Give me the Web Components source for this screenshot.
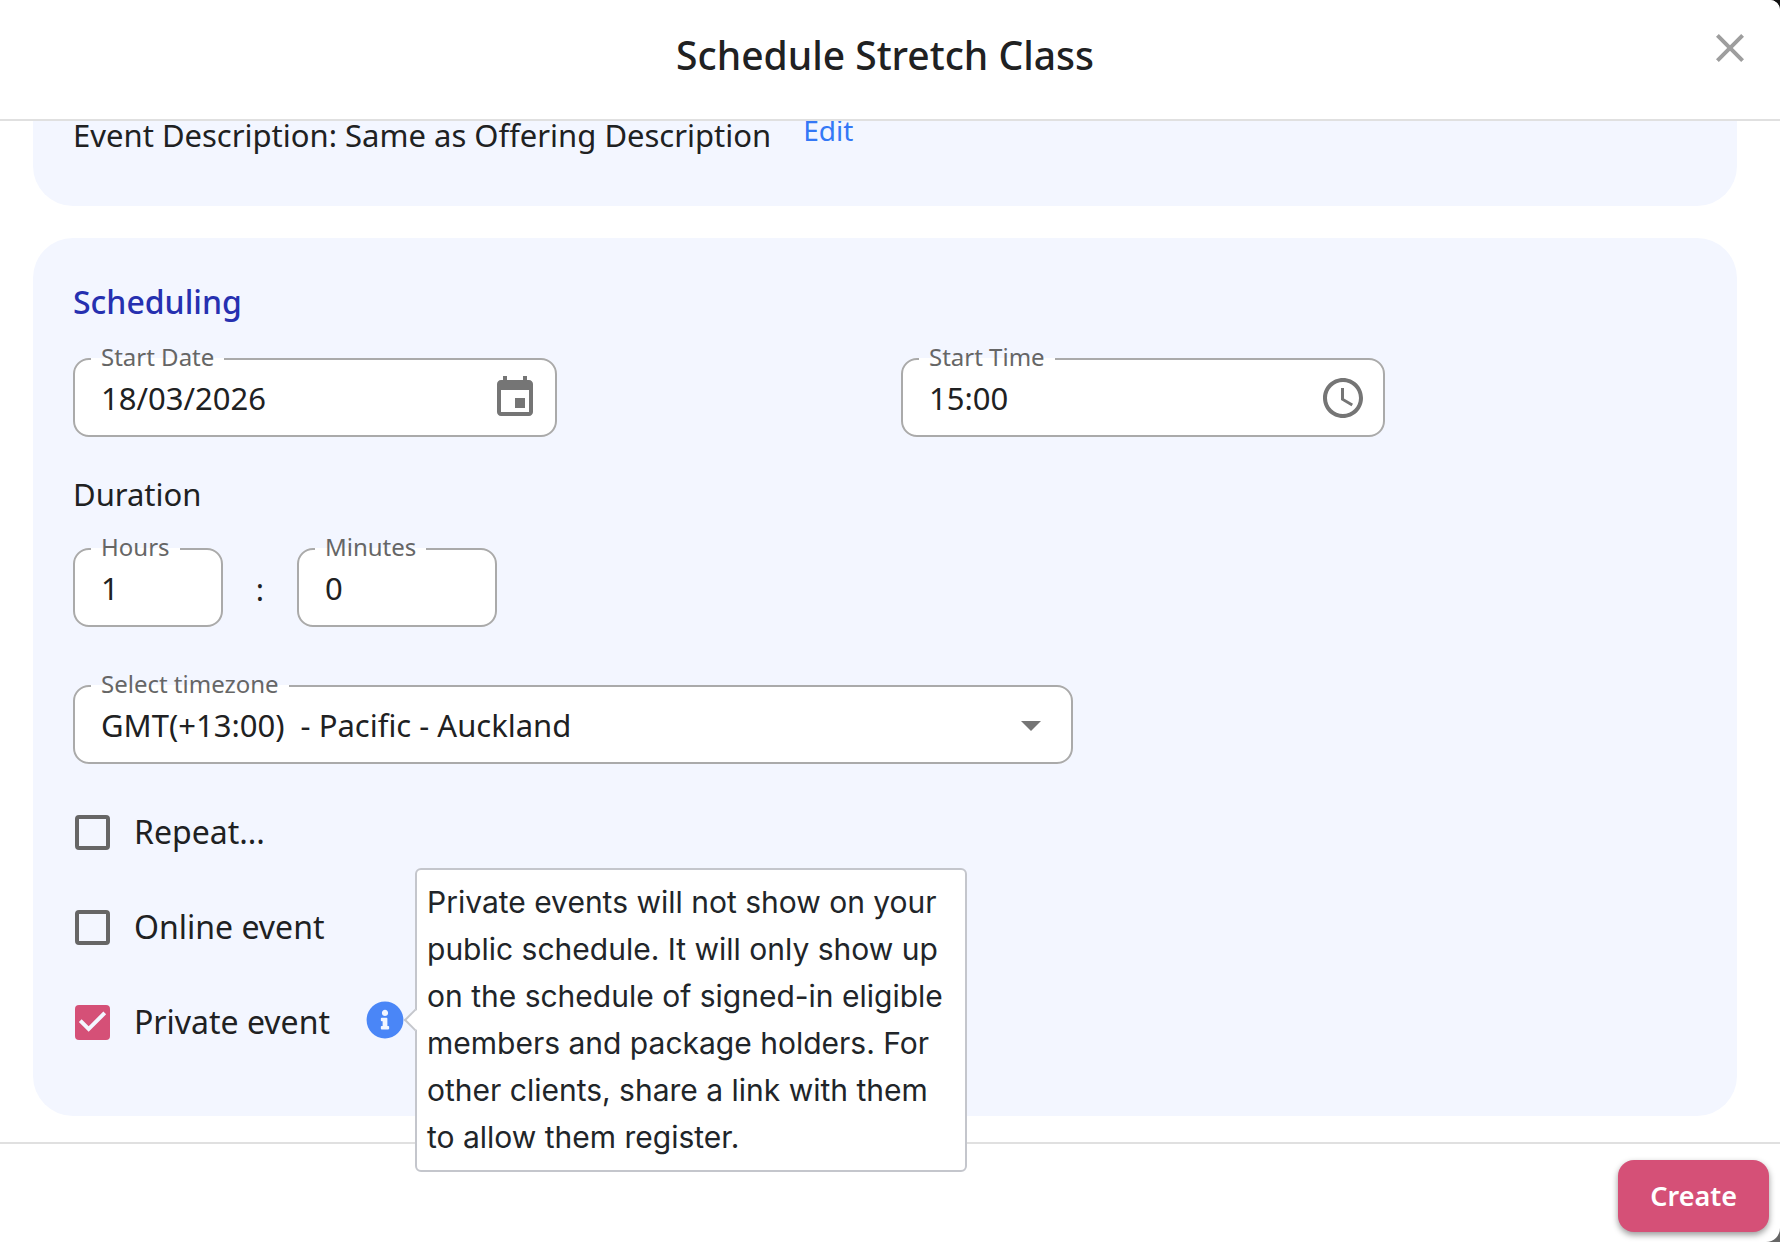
<!DOCTYPE html>
<html lang="en">
<head>
<meta charset="utf-8">
<meta name="viewport" content="width=device-width, initial-scale=1">
<title>Schedule Stretch Class</title>
<style>
  body {
    margin: 0;
    background: linear-gradient(#111 50%, #666 50%);
    color: #202122;
    font: 400 31px/44px "Noto Sans", sans-serif;
  }
</style>

<template id="schedule-dialog-template">
  <style>
    :host {
      display: grid;
      grid-template-rows: auto minmax(0, 1fr) auto;
      height: 100vh;
      overflow: hidden;
      background: #fff;
      border-radius: 0 10px 14px 0;
    }
    header {
      position: relative;
      z-index: 1;
      display: flex;
      align-items: flex-start;
      padding: 24px 26px 39px 64px;
      border-bottom: 2px solid #e0e0e0;
      background: #fff;
    }
    h1 {
      flex: 1;
      margin: 5px 0 0;
      font-size: 39px;
      line-height: 51px;
      font-weight: 500;
      text-align: center;
    }
    .close {
      display: flex;
      padding: 0;
      border: 0;
      background: none;
      color: #9e9e9e;
      cursor: pointer;
    }
    /* the panel list rests at its end, earlier panels run out under the header */
    main {
      display: flex;
      flex-direction: column;
      justify-content: flex-end;
      gap: 32px;
      min-height: 0;
      padding: 0 43px 26px 33px;
    }
    footer {
      display: flex;
      justify-content: flex-end;
      padding: 16px 11px 10px;
      border-top: 2px solid #e0e0e0;
    }
  </style>
  <header>
    <h1><slot name="title"></slot></h1>
    <button class="close" type="button" aria-label="Close">
      <svg width="48" height="48" viewBox="0 0 24 24" fill="currentColor"><path d="M19 6.41L17.59 5 12 10.59 6.41 5 5 6.41 10.59 12 5 17.59 6.41 19 12 13.41 17.59 19 19 17.59 13.41 12z"/></svg>
    </button>
  </header>
  <main><slot></slot></main>
  <footer><slot name="actions"></slot></footer>
</template>

<template id="form-panel-template">
  <style>
    :host {
      display: block;
      flex-shrink: 0;
      padding: 42px 40px 49px;
      background: #f3f6ff;
      border-radius: 40px;
    }
    :host([roomy]) { padding-bottom: 72px; }
  </style>
  <slot></slot>
</template>

<template id="panel-heading-template">
  <style>
    :host { display: block; margin-bottom: 18px; }
    h2 { margin: 0; font-size: 32px; line-height: 44px; font-weight: 500; color: #2630b0; }
  </style>
  <h2><slot></slot></h2>
</template>

<template id="event-description-template">
  <style>
    :host { display: flex; align-items: flex-start; gap: 32px; }
    a { font-size: 28px; line-height: 34px; color: #3478f6; text-decoration: none; }
  </style>
  <span><slot></slot></span>
  <a href="#edit">Edit</a>
</template>

<template id="outlined-field-template">
  <style>
    :host { display: block; }
    fieldset {
      min-width: 0;
      margin: 0;
      padding: 0 16px 15px;
      border: 2px solid #aaa;
      border-radius: 16px;
      background: #fff;
    }
    legend {
      padding: 0 10px 4px;
      font-size: 24px;
      line-height: 30px;
      color: #666;
    }
    label { display: block; }
    .row { display: grid; grid-template-columns: minmax(0, 1fr) auto; }
    input, select {
      grid-area: 1 / 1 / 2 / 3;
      box-sizing: border-box;
      width: 100%;
      height: 44px;
      margin: 0;
      padding: 0 10px;
      border: 0;
      outline: 0;
      appearance: none;
      background: none;
      color: inherit;
      font: inherit;
    }
    svg {
      grid-area: 1 / 2;
      margin: -2px 0;
      fill: #757575;
      pointer-events: none;
    }
  </style>
  <fieldset>
    <legend><label for="control"></label></legend>
    <div class="row"></div>
  </fieldset>
</template>

<template id="check-option-template">
  <style>
    :host { display: flex; align-items: center; gap: 36px; height: 44px; font-size: 32px; }
    label { display: flex; align-items: center; gap: 24px; cursor: pointer; }
    input {
      box-sizing: border-box;
      width: 35px;
      height: 35px;
      margin: 0 0 0 2px;
      border: 4px solid #666;
      border-radius: 4px;
      appearance: none;
    }
    input:checked { border: 0; background: #d55077; }
    input:checked::before {
      content: "";
      display: block;
      height: 100%;
      background: #f3f6ff;
      clip-path: polygon(39% 78%, 11% 50%, 19% 42%, 39% 62%, 81% 20%, 89% 28%);
    }
  </style>
  <label><input type="checkbox"><span><slot></slot></span></label>
  <slot name="help"></slot>
</template>

<template id="info-tip-template">
  <style>
    :host { display: block; position: relative; padding-bottom: 4px; }
    button { display: flex; padding: 0; border: 0; background: none; }
    .tip {
      position: absolute;
      left: 49px;
      top: -133px;
      box-sizing: border-box;
      width: 552px;
      padding: 9px 10px;
      border: 2px solid #c4c6cc;
      border-radius: 6px;
      background: #fff;
      color: #212529;
      font: 400 30px/47px Inter, sans-serif;
    }
    .tip::before {
      content: "";
      position: absolute;
      left: -10px;
      top: 142px;
      width: 14px;
      height: 14px;
      border: solid #c4c6cc;
      border-width: 0 0 2px 2px;
      background: #fff;
      transform: rotate(45deg);
    }
  </style>
  <button type="button" aria-label="More information" aria-describedby="tip">
    <svg width="38" height="38" viewBox="0 0 512 512"><path fill="#4a86f7" d="M256 8C119 8 8 119 8 256s111 248 248 248 248-111 248-248S393 8 256 8zm0 110c23.200 0 42 18.800 42 42s-18.800 42-42 42-42-18.800-42-42 18.800-42 42-42zm56 254c0 6.600-5.400 12-12 12h-88c-6.600 0-12-5.400-12-12v-24c0-6.600 5.400-12 12-12h12v-64h-12c-6.600 0-12-5.400-12-12v-24c0-6.600 5.400-12 12-12h64c6.600 0 12 5.400 12 12v100h12c6.600 0 12 5.400 12 12v24z"/></svg>
  </button>
  <div class="tip" id="tip" role="tooltip"><slot></slot></div>
</template>

<template id="primary-button-template">
  <style>
    :host { display: block; }
    button {
      height: 72px;
      padding: 0 32px;
      border: 0;
      border-radius: 16px;
      background: #d55077;
      box-shadow: 0 3px 6px rgba(0, 0, 0, .4);
      color: #fff;
      font: 600 27px/38px "Noto Sans", sans-serif;
      cursor: pointer;
    }
  </style>
  <button type="button"><slot></slot></button>
</template>

<template id="schedule-form-template">
  <style>
    :host { display: block; }
    .start { display: grid; grid-template-columns: 1fr 1fr; gap: 32px; }
    .start outlined-field { max-width: 484px; }
    h3 { margin: 35px 0 16px; font-size: 31px; line-height: 44px; font-weight: 400; }
    .duration { display: flex; align-items: flex-end; margin-bottom: 42px; }
    .hours { width: 150px; }
    .minutes { width: 200px; }
    .colon { width: 74px; padding-bottom: 16px; text-align: center; }
    .zone { max-width: 1000px; margin-bottom: 46px; }
    .options { display: grid; gap: 51px; }
  </style>
  <div class="start">
    <outlined-field label="Start Date" value="18/03/2026" icon="calendar"></outlined-field>
    <outlined-field label="Start Time" value="15:00" icon="clock"></outlined-field>
  </div>
  <h3>Duration</h3>
  <div class="duration">
    <outlined-field class="hours" label="Hours" value="1"></outlined-field>
    <span class="colon">:</span>
    <outlined-field class="minutes" label="Minutes" value="0"></outlined-field>
  </div>
  <outlined-field class="zone" kind="select" label="Select timezone" value="GMT(+13:00)&nbsp; - Pacific - Auckland" icon="arrow"></outlined-field>
  <div class="options">
    <check-option>Repeat...</check-option>
    <check-option>Online event</check-option>
    <check-option checked>Private event
      <info-tip slot="help">Private events will not show on your public schedule. It will only show up on the schedule of signed-in eligible members and package holders. For other clients, share a link with them to allow them register.</info-tip>
    </check-option>
  </div>
</template>
</head>
<body>

<schedule-dialog>
  <span slot="title">Schedule Stretch Class</span>
  <form-panel>
    <event-description>Event Description: Same as Offering Description</event-description>
  </form-panel>
  <form-panel roomy>
    <panel-heading>Scheduling</panel-heading>
    <schedule-form></schedule-form>
  </form-panel>
  <primary-button slot="actions">Create</primary-button>
</schedule-dialog>

<script>
const ICONS = {
  calendar: 'M17 12h-5v5h5v-5zM16 1v2H8V1H6v2H5c-1.11 0-1.99.9-1.99 2L3 19c0 1.100.89 2 2 2h14c1.100 0 2-.9 2-2V5c0-1.100-.9-2-2-2h-1V1h-2zm3 18H5V8h14v11z',
  clock: 'M11.99 2C6.470 2 2 6.480 2 12s4.470 10 9.990 10C17.520 22 22 17.520 22 12S17.520 2 11.990 2zM12 20c-4.420 0-8-3.580-8-8s3.580-8 8-8 8 3.580 8 8-3.580 8-8 8zm.5-13H11v6l5.250 3.150.75-1.230-4.500-2.670z',
  arrow: 'M7 10l5 5 5-5z'
}

class TemplateElement extends HTMLElement {
  constructor() {
    super()
    const template = document.getElementById(this.localName + '-template')
    this.attachShadow({ mode: 'open' }).appendChild(template.content.cloneNode(true))
  }
}

// Text box or drop-down whose label sits in a notch of the outline
class OutlinedField extends TemplateElement {
  connectedCallback() {
    const row = this.shadowRoot.querySelector('.row')
    if (row.firstChild) return
    const value = this.getAttribute('value')
    this.shadowRoot.querySelector('label').textContent = this.getAttribute('label')

    const isSelect = this.getAttribute('kind') === 'select'
    const control = document.createElement(isSelect ? 'select' : 'input')
    control.id = 'control'
    if (isSelect) control.add(new Option(value))
    else control.value = value
    row.append(control)

    const icon = ICONS[this.getAttribute('icon')]
    if (icon) {
      row.insertAdjacentHTML('beforeend',
        `<svg width="48" height="48" viewBox="0 0 24 24" aria-hidden="true"><path d="${icon}"/></svg>`)
    }
  }
}

class CheckOption extends TemplateElement {
  connectedCallback() {
    this.shadowRoot.querySelector('input').checked = this.hasAttribute('checked')
  }
}

customElements.define('outlined-field', OutlinedField)
customElements.define('check-option', CheckOption)
for (const name of ['info-tip', 'primary-button', 'panel-heading', 'event-description',
  'schedule-form', 'form-panel', 'schedule-dialog']) {
  customElements.define(name, class extends TemplateElement {})
}
</script>
</body>
</html>
